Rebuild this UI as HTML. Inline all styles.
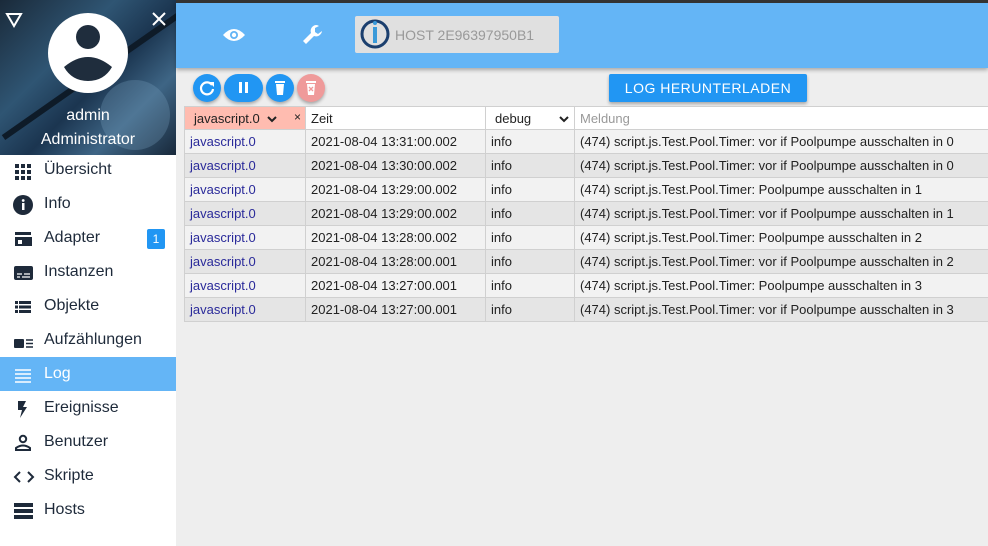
<!DOCTYPE html><html><head><meta charset="utf-8"><style>
*{box-sizing:border-box;margin:0;padding:0}
body{width:988px;height:546px;overflow:hidden;font-family:"Liberation Sans",sans-serif;background:#eeeeee;position:relative}
#side{position:absolute;left:0;top:0;width:176px;height:546px;background:#fff}
#hdr{position:absolute;left:0;top:0;width:176px;height:155px;background:linear-gradient(135deg,#1a2a3a 0%,#2f5573 35%,#1b3550 55%,#3e6585 75%,#18283a 100%);overflow:hidden}
.item{position:absolute;left:0;width:176px;height:34px;font-size:16px;color:#1e2a3a;line-height:34px;padding-left:44px}
.item svg{position:absolute;left:13px;top:8px}
#top{position:absolute;left:176px;top:0;width:812px;height:68px;background:#64b5f6;border-top:3px solid #333;box-shadow:0 2px 4px rgba(0,0,0,.3)}
.btn{position:absolute;top:74px;height:28px;border-radius:14px;background:#2196f3;box-shadow:0 2px 3px rgba(0,0,0,.3)}
table{position:absolute;left:184px;top:106px;width:810px;border-collapse:collapse;font-size:13px}
td{height:24px;padding:0 5px;border:1px solid #d0d0d0;white-space:nowrap;color:#222}
tr:first-child td{height:23px}
td:first-child{color:#2a2a9a}
tr.o td{background:#f2f2f2} tr.e td{background:#e5e5e5}
</style></head><body>
<div id="side">
<div id="hdr">
<div style="position:absolute;left:-20px;top:60px;width:260px;height:6px;background:#0e1b28;transform:rotate(-35deg)"></div>
<div style="position:absolute;left:100px;top:80px;width:70px;height:70px;border-radius:50%;background:rgba(120,160,190,.3)"></div>
<svg style="position:absolute;left:5px;top:12px" width="18" height="16"><path d="M2 2H16L9 14Z" fill="none" stroke="#fff" stroke-width="2"/></svg>
<svg style="position:absolute;left:151px;top:11px" width="16" height="16"><path d="M2 2L14 14M14 2L2 14" stroke="#fff" stroke-width="2"/></svg>
<svg style="position:absolute;left:48px;top:13px" width="80" height="80"><circle cx="40" cy="40" r="40" fill="#fff"/><circle cx="40" cy="24" r="12" fill="#1f2d3d"/><path d="M16 54Q40 34 64 54Q56 68 40 68Q24 68 16 54Z" fill="#1f2d3d"/></svg>
<div style="position:absolute;top:107px;width:176px;text-align:center;color:#fff;font-size:16px">admin</div>
<div style="position:absolute;top:131px;width:176px;text-align:center;color:#fff;font-size:16px">Administrator</div>
</div>
<div class="item" style="top:153px"><svg width="20" height="20"><g fill="#1e2a3a"><rect x="2" y="3" width="4" height="4"/><rect x="8" y="3" width="4" height="4"/><rect x="14" y="3" width="4" height="4"/><rect x="2" y="9" width="4" height="4"/><rect x="8" y="9" width="4" height="4"/><rect x="14" y="9" width="4" height="4"/><rect x="2" y="15" width="4" height="4"/><rect x="8" y="15" width="4" height="4"/><rect x="14" y="15" width="4" height="4"/></g></svg>Übersicht</div>
<div class="item" style="top:187px"><svg width="20" height="20"><circle cx="10" cy="10" r="10" fill="#1e2a3a"/><rect x="9" y="8" width="2.5" height="7" fill="#fff"/><circle cx="10.2" cy="5.5" r="1.4" fill="#fff"/></svg>Info</div>
<div class="item" style="top:221px"><svg width="20" height="20"><path d="M2 3H18V6H2ZM1 8H19V17H2V8ZM5 11V15H9V11Z" fill="#1e2a3a" fill-rule="evenodd"/></svg>Adapter<span style="position:absolute;left:147px;top:8px;width:18px;height:20px;background:#2196f3;color:#fff;font-size:12px;line-height:20px;text-align:center;border-radius:2px">1</span></div>
<div class="item" style="top:255px"><svg width="20" height="20"><rect x="1" y="3" width="19" height="14" rx="2" fill="#1e2a3a"/><path d="M4 11H9M11 11H17M4 14H7M9 14H17" stroke="#fff" stroke-width="1.2"/></svg>Instanzen</div>
<div class="item" style="top:289px"><svg width="20" height="20"><g fill="#1e2a3a"><rect x="2" y="4" width="3" height="3"/><rect x="6" y="4" width="12" height="3"/><rect x="2" y="8.5" width="3" height="3"/><rect x="6" y="8.5" width="12" height="3"/><rect x="2" y="13" width="3" height="3"/><rect x="6" y="13" width="12" height="3"/></g></svg>Objekte</div>
<div class="item" style="top:323px"><svg width="22" height="20"><rect x="1" y="8" width="10" height="9" rx="1" fill="#1e2a3a"/><path d="M13 9H20M13 12.5H20M13 16H20" stroke="#1e2a3a" stroke-width="1.5"/></svg>Aufzählungen</div>
<div class="item" style="top:357px;background:#64b5f6;color:#fff"><svg width="20" height="20"><path d="M2 5H18M2 9H18M2 13H18M2 17H18" stroke="#fff" stroke-width="1.6"/></svg>Log</div>
<div class="item" style="top:391px"><svg width="20" height="20"><path d="M5 2H13L10 8H14L7 19L9 11H5Z" fill="#1e2a3a"/></svg>Ereignisse</div>
<div class="item" style="top:425px"><svg width="20" height="20"><circle cx="10" cy="6" r="3.2" fill="none" stroke="#1e2a3a" stroke-width="2"/><path d="M3 17V15Q10 10 17 15V17Z" fill="none" stroke="#1e2a3a" stroke-width="2"/></svg>Benutzer</div>
<div class="item" style="top:459px"><svg width="22" height="20"><path d="M7 5L2 10L7 15M15 5L20 10L15 15" fill="none" stroke="#1e2a3a" stroke-width="2"/></svg>Skripte</div>
<div class="item" style="top:493px"><svg width="22" height="20"><g fill="#1e2a3a"><rect x="1" y="2" width="19" height="4"/><rect x="1" y="8" width="19" height="4"/><rect x="1" y="14" width="19" height="4"/></g></svg>Hosts</div>
</div>
<div id="top">
<svg style="position:absolute;left:46px;top:24px" width="24" height="16"><path d="M1 8Q12 -4 23 8Q12 20 1 8Z" fill="#fff"/><circle cx="12" cy="8" r="4" fill="#64b5f6"/><circle cx="12" cy="8" r="2.2" fill="#fff"/></svg>
<svg style="position:absolute;left:125px;top:20px" width="24" height="24"><path d="M15 2A6 6 0 0 0 10 10L2 18L5 21L13 13A6 6 0 0 0 21 8L17 11L14 9L14 5L18 3A6 6 0 0 0 15 2Z" fill="#fff"/></svg>
<div style="position:absolute;left:179px;top:13px;width:204px;height:37px;background:#e0e0e0;border-radius:2px">
<svg style="position:absolute;left:5px;top:3px" width="30" height="30"><circle cx="15" cy="15" r="13" fill="none" stroke="#1b3f6e" stroke-width="3"/><rect x="13" y="8" width="4" height="16" fill="#3a9ad9"/><circle cx="15" cy="4" r="2" fill="#3a9ad9"/></svg>
<span style="position:absolute;left:40px;top:11px;font-size:14px;color:#999">HOST 2E96397950B1</span></div>
</div>
<div class="btn" style="left:193px;width:28px"><svg width="28" height="28"><path d="M19 11A6 6 0 1 0 20 15" fill="none" stroke="#fff" stroke-width="2.2"/><path d="M16 8H21V13Z" fill="#fff"/></svg></div>
<div class="btn" style="left:224px;width:39px"><svg width="39" height="28"><rect x="15" y="8" width="3" height="11" fill="#fff"/><rect x="21" y="8" width="3" height="11" fill="#fff"/></svg></div>
<div class="btn" style="left:266px;width:28px"><svg width="28" height="28"><rect x="9" y="7" width="10" height="2" fill="#fff"/><path d="M10 10H18L17 21H11Z" fill="#fff"/></svg></div>
<div class="btn" style="left:297px;width:28px;background:#ef9a9a"><svg width="28" height="28"><rect x="9" y="7" width="10" height="2" fill="#fff"/><path d="M10 10H18L17 21H11Z" fill="#fff"/><path d="M12 13L16 17M16 13L12 17" stroke="#ef9a9a" stroke-width="1.3"/></svg></div>
<div style="position:absolute;left:609px;top:74px;width:198px;height:28px;background:#2196f3;color:#fff;font-size:14px;line-height:28px;text-align:center;letter-spacing:.5px;border-radius:2px;box-shadow:0 2px 3px rgba(0,0,0,.3)">LOG HERUNTERLADEN</div>
<table>
<tr><td style="width:121px;background:#ffbcb0;color:#222;padding-left:9px;position:relative">javascript.0 <svg width="10" height="8" style="margin-left:4px"><path d="M1 2L5 6L9 2" fill="none" stroke="#222" stroke-width="2"/></svg><span style="position:absolute;right:4px;top:3px;font-size:12px">×</span></td><td style="width:180px;background:#fff">Zeit</td><td style="width:89px;background:#fff;padding-left:9px">debug <svg width="10" height="8" style="float:right;margin-top:4px"><path d="M1 2L5 6L9 2" fill="none" stroke="#222" stroke-width="2"/></svg></td><td style="background:#fff;color:#999">Meldung</td></tr>
<tr class="o"><td>javascript.0</td><td>2021-08-04 13:31:00.002</td><td>info</td><td>(474) script.js.Test.Pool.Timer: vor if Poolpumpe ausschalten in 0</td></tr>
<tr class="e"><td>javascript.0</td><td>2021-08-04 13:30:00.002</td><td>info</td><td>(474) script.js.Test.Pool.Timer: vor if Poolpumpe ausschalten in 0</td></tr>
<tr class="o"><td>javascript.0</td><td>2021-08-04 13:29:00.002</td><td>info</td><td>(474) script.js.Test.Pool.Timer: Poolpumpe ausschalten in 1</td></tr>
<tr class="e"><td>javascript.0</td><td>2021-08-04 13:29:00.002</td><td>info</td><td>(474) script.js.Test.Pool.Timer: vor if Poolpumpe ausschalten in 1</td></tr>
<tr class="o"><td>javascript.0</td><td>2021-08-04 13:28:00.002</td><td>info</td><td>(474) script.js.Test.Pool.Timer: Poolpumpe ausschalten in 2</td></tr>
<tr class="e"><td>javascript.0</td><td>2021-08-04 13:28:00.001</td><td>info</td><td>(474) script.js.Test.Pool.Timer: vor if Poolpumpe ausschalten in 2</td></tr>
<tr class="o"><td>javascript.0</td><td>2021-08-04 13:27:00.001</td><td>info</td><td>(474) script.js.Test.Pool.Timer: Poolpumpe ausschalten in 3</td></tr>
<tr class="e"><td>javascript.0</td><td>2021-08-04 13:27:00.001</td><td>info</td><td>(474) script.js.Test.Pool.Timer: vor if Poolpumpe ausschalten in 3</td></tr>
</table>
</body></html>
